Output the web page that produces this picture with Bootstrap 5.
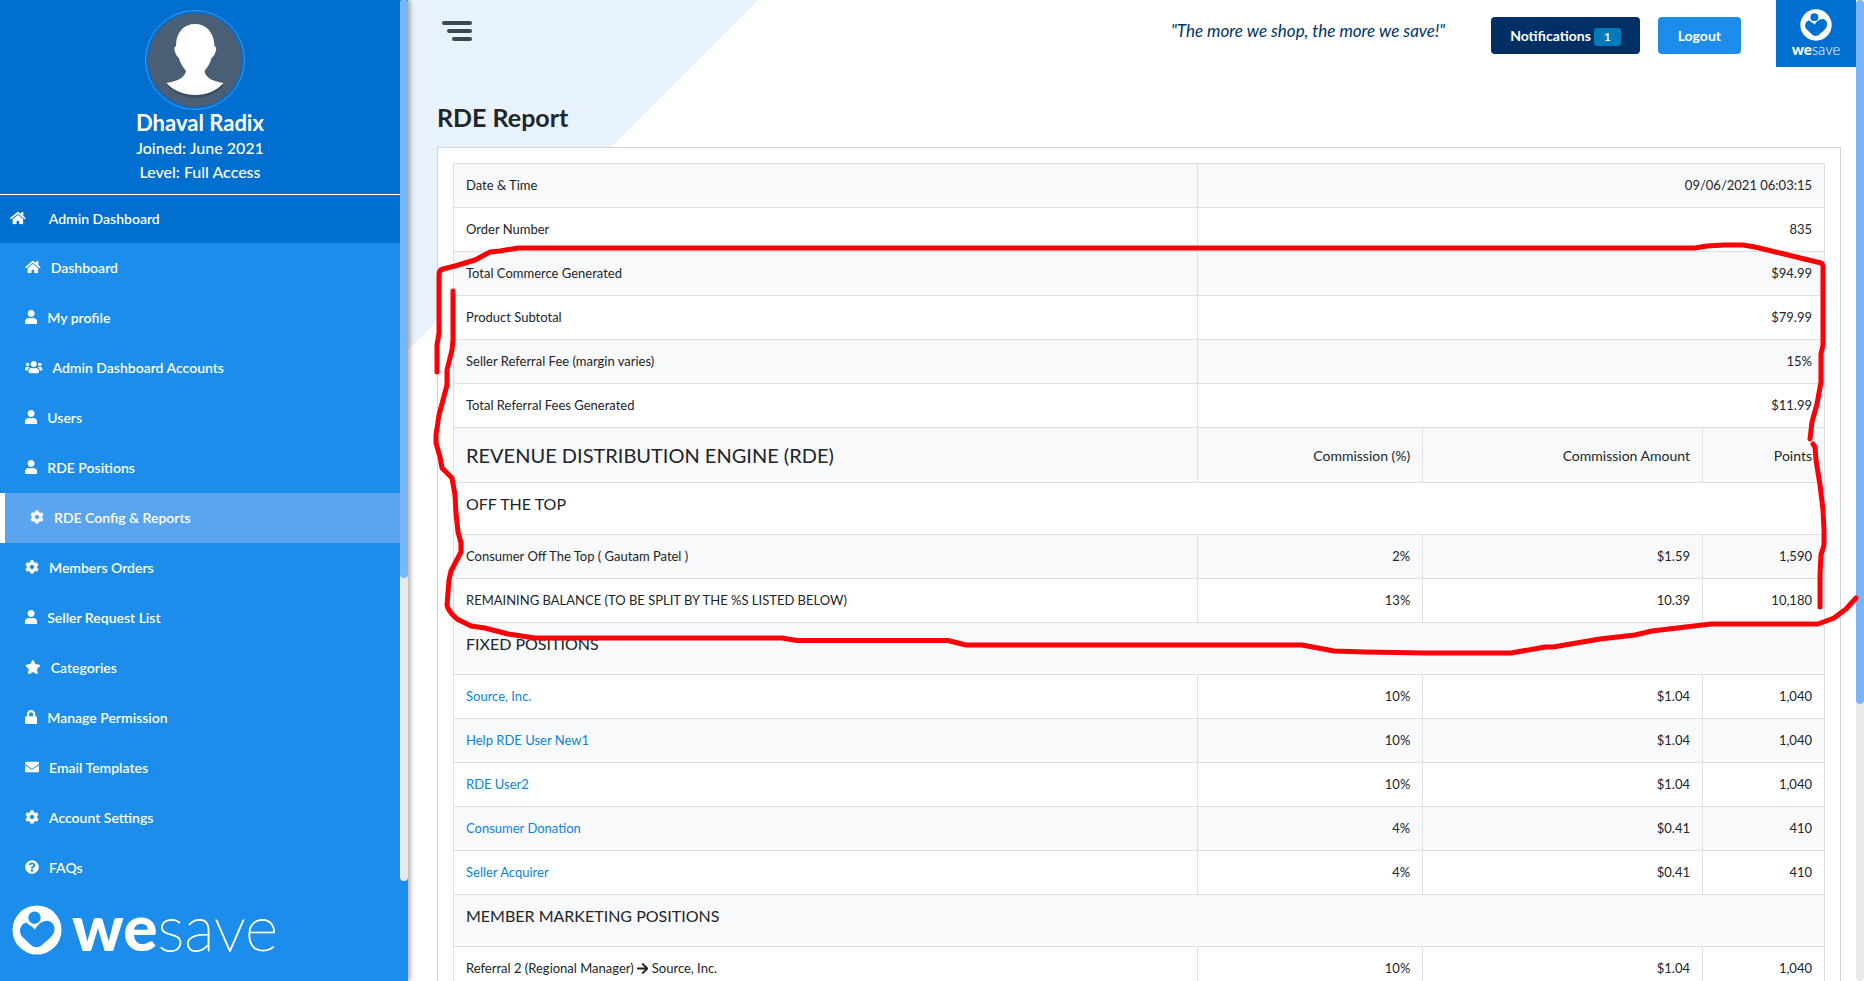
<!DOCTYPE html>
<html lang="en">
<head>
<meta charset="utf-8">
<meta name="viewport" content="width=device-width, initial-scale=1">
<title>RDE Report</title>
<link href="https://cdn.jsdelivr.net/npm/bootstrap@5.3.0/dist/css/bootstrap.min.css" rel="stylesheet">
<style>
  body { font-family: Lato, "Open Sans", sans-serif; color: #212529; background: #fff; }
  .ico { height: 14px; width: auto; fill: currentColor; flex: none; }

  .sidebar { width: 408px; background: #1c8dea; color: #fff; box-shadow: 2px 0 5px rgba(0,0,0,.35); z-index: 2; }
  .side-scroll { flex: 1 1 0; min-height: 0; }
  .side-panel { overflow: hidden; }
  .profile { background: #006fcf; border-bottom: 1px solid #fff; height: 195px; padding-top: 10px; }
  .avatar { width: 100px; height: 100px; margin-right: 10px; }
  .profile-name { font-size: 22px; line-height: 26px; font-weight: 700; }
  .profile-meta { font-size: 16px; line-height: 24px; font-weight: 500; }
  .side-link { height: 50px; padding: 0 0 2px 25px; gap: 10px; color: #fff; font-size: 14px; font-weight: 600; text-decoration: none; }
  .side-link.top-link { background: #006fcf; height: 48px; padding-left: 10px; gap: 23px; }
  .side-link.active { background: #5aa4ee; border-left: 5px solid #fff; }
  .track { width: 8px; background: #e9e9e9; border-radius: 4px; flex: none; }
  .thumb { background: #7ab5fa; border-radius: 4px; }
  .brand-bar { height: 100px; padding: 24px 12px; gap: 10px; }
  .brand-word { font-size: 64px; line-height: 44px; }
  .brand-word b, .logo-word b { font-weight: 900; }
  .brand-word span { font-weight: 100; -webkit-text-stroke: 1px #fff; }

  .main { background: linear-gradient(135deg, #e7f2fd 247px, transparent 248px); min-width: 0; }
  .menu-btn { margin: 21px 0 0 34px; line-height: 0; }
  .slogan { font-size: 17px; line-height: 24px; font-style: italic; color: #003468; margin: 19px 46px 0 auto; }
  .action { height: 37px; margin-top: 17px; border-radius: 4px; font-size: 14px; font-weight: 700; color: #fff; padding: 0 19px; border: 0; }
  .action-notify { background: #002f66; }
  .action-notify .badge { background: #007ab8; font-size: 11px; line-height: 18px; font-weight: 700; padding: 0 10px; border-radius: 3px; }
  .action-logout { background: #1c8dea; margin-left: 18px; padding: 0 20px; }
  .corner-logo { width: 80px; height: 67px; background: #006fcf; margin-left: 35px; color: #fff; text-decoration: none; padding-top: 9px; }
  .logo-word { font-size: 15px; line-height: 16px; }
  .logo-word span { font-weight: 300; }
  .page-title { font-size: 25px; line-height: 30px; font-weight: 700; margin: 35px 0 15px 29px; }
  .report { margin: 0 15px 0 29px; border: 1px solid #ced4d9; border-radius: 0; padding: 15px; }
  .report-table { --bs-table-striped-bg: #f8f9fb; --bs-table-striped-color: #212529; border-color: #dcdfe3; font-size: 13px; line-height: 19px; margin: 0; table-layout: fixed; }
  .report-table > tbody > tr > * { padding: 12px; font-weight: 400; vertical-align: middle; }
  .report-table > tbody > tr > th { font-size: 14px; }
  .report-table a { color: #0a83e0; text-decoration: none; }
  .engine-title { font-size: 20px; line-height: 30px; font-weight: 400; margin: 0; }
  .section-title { font-size: 16px; line-height: 17px; font-weight: 400; margin: 0 0 10px; }
  .arrow { height: 13px; vertical-align: -2px; }
  .marker { left: 0; top: 0; z-index: 5; pointer-events: none; overflow: visible; }
</style>
</head>
<body class="overflow-hidden">

<svg class="d-none" aria-hidden="true">
  <symbol id="i-home" viewBox="0 0 576 512"><path d="M280.37 148.26L96 300.11V464a16 16 0 0 0 16 16l112.06-.29a16 16 0 0 0 15.92-16V368a16 16 0 0 1 16-16h64a16 16 0 0 1 16 16v95.64a16 16 0 0 0 16 16.05L464 480a16 16 0 0 0 16-16V300L295.67 148.26a12.19 12.19 0 0 0-15.3 0zM571.6 251.47L488 182.56V44.05a12 12 0 0 0-12-12h-56a12 12 0 0 0-12 12v72.61L318.47 43a48 48 0 0 0-61 0L4.34 251.47a12 12 0 0 0-1.6 16.9l25.5 31A12 12 0 0 0 45.15 301l235.22-193.74a12.19 12.19 0 0 1 15.3 0L530.9 301a12 12 0 0 0 16.9-1.6l25.5-31a12 12 0 0 0-1.7-16.93z"/></symbol>
  <symbol id="i-user" viewBox="0 0 448 512"><path d="M224 256c70.7 0 128-57.3 128-128S294.7 0 224 0 96 57.3 96 128s57.3 128 128 128zm89.6 32h-16.7c-22.2 10.2-46.9 16-72.9 16s-50.6-5.8-72.9-16h-16.7C60.2 288 0 348.2 0 422.4V464c0 26.5 21.5 48 48 48h352c26.5 0 48-21.5 48-48v-41.6c0-74.2-60.2-134.4-134.4-134.4z"/></symbol>
  <symbol id="i-users" viewBox="0 0 640 512"><path d="M96 224c35.3 0 64-28.7 64-64s-28.7-64-64-64-64 28.7-64 64 28.7 64 64 64zm448 0c35.3 0 64-28.7 64-64s-28.7-64-64-64-64 28.7-64 64 28.7 64 64 64zm32 32h-64c-17.6 0-33.5 7.1-45.1 18.6 40.3 22.1 68.9 62 75.1 109.4h66c17.7 0 32-14.3 32-32v-32c0-35.3-28.7-64-64-64zm-256 0c61.9 0 112-50.1 112-112S381.9 32 320 32 208 82.1 208 144s50.1 112 112 112zm76.8 32h-8.3c-20.8 10-43.9 16-68.5 16s-47.6-6-68.5-16h-8.3C179.6 288 128 339.6 128 403.2V432c0 26.5 21.5 48 48 48h288c26.5 0 48-21.5 48-48v-28.8c0-63.6-51.6-115.2-115.2-115.2zm-223.7-13.4C161.5 263.1 145.6 256 128 256H64c-35.3 0-64 28.7-64 64v32c0 17.7 14.3 32 32 32h65.9c6.3-47.4 34.9-87.3 75.2-109.4z"/></symbol>
  <symbol id="i-cog" viewBox="0 0 512 512"><path d="M487.4 315.7l-42.6-24.6c4.3-23.2 4.3-47 0-70.2l42.6-24.6c4.9-2.8 7.1-8.6 5.5-14-11.1-35.6-30-67.8-54.7-94.6-3.8-4.1-10-5.1-14.8-2.3L380.8 110c-17.9-15.4-38.5-27.3-60.8-35.1V25.8c0-5.6-3.9-10.5-9.4-11.7-36.7-8.2-74.3-7.8-109.2 0-5.5 1.2-9.4 6.1-9.4 11.7V75c-22.2 7.9-42.8 19.8-60.8 35.1L88.7 85.5c-4.9-2.8-11-1.9-14.8 2.3-24.7 26.7-43.6 58.9-54.7 94.6-1.7 5.4.6 11.2 5.5 14L67.3 221c-4.3 23.2-4.3 47 0 70.2l-42.6 24.6c-4.9 2.8-7.1 8.6-5.5 14 11.1 35.6 30 67.8 54.7 94.6 3.8 4.1 10 5.1 14.8 2.3l42.6-24.6c17.9 15.4 38.5 27.3 60.8 35.1v49.2c0 5.6 3.9 10.5 9.4 11.7 36.7 8.2 74.3 7.8 109.2 0 5.5-1.2 9.4-6.1 9.4-11.7v-49.2c22.2-7.9 42.8-19.8 60.8-35.1l42.6 24.6c4.9 2.8 11 1.9 14.8-2.3 24.7-26.7 43.6-58.9 54.7-94.6 1.5-5.5-.7-11.3-5.6-14.1zM256 336c-44.1 0-80-35.9-80-80s35.9-80 80-80 80 35.9 80 80-35.9 80-80 80z"/></symbol>
  <symbol id="i-star" viewBox="0 0 576 512"><path d="M259.3 17.8L194 150.2 47.9 171.5c-26.2 3.8-36.7 36.1-17.7 54.6l105.7 103-25 145.5c-4.5 26.3 23.2 46 46.4 33.7L288 439.6l130.7 68.7c23.2 12.2 50.9-7.4 46.4-33.7l-25-145.5 105.7-103c19-18.5 8.5-50.8-17.7-54.6L382 150.2 316.7 17.8c-11.7-23.6-45.6-23.9-57.4 0z"/></symbol>
  <symbol id="i-lock" viewBox="0 0 448 512"><path d="M400 224h-24v-72C376 68.2 307.8 0 224 0S72 68.2 72 152v72H48c-26.5 0-48 21.5-48 48v192c0 26.5 21.5 48 48 48h352c26.5 0 48-21.5 48-48V272c0-26.5-21.5-48-48-48zm-104 0H152v-72c0-39.7 32.3-72 72-72s72 32.3 72 72v72z"/></symbol>
  <symbol id="i-mail" viewBox="0 0 512 512"><path d="M502.3 190.8c3.9-3.1 9.7-.2 9.7 4.7V400c0 26.5-21.5 48-48 48H48c-26.5 0-48-21.5-48-48V195.6c0-5 5.7-7.8 9.7-4.7 22.4 17.4 52.1 39.5 154.1 113.6 21.1 15.4 56.7 47.8 92.2 47.6 35.7.3 72-32.8 92.3-47.6 102-74.1 131.6-96.3 154-113.7zM256 320c23.2.4 56.6-29.2 73.4-41.4 132.7-96.3 142.8-104.7 173.4-128.7 5.8-4.5 9.2-11.5 9.2-18.9v-19c0-26.5-21.5-48-48-48H48c-26.5 0-48 21.5-48 48v19c0 7.4 3.4 14.3 9.2 18.9 30.6 23.9 40.7 32.4 173.4 128.7 16.8 12.2 50.2 41.8 73.4 41.4z"/></symbol>
  <symbol id="i-help" viewBox="0 0 512 512"><path d="M504 256c0 136.997-111.043 248-248 248S8 392.997 8 256C8 119.083 119.043 8 256 8s248 111.083 248 248zM262.655 90c-54.497 0-89.255 22.957-116.549 63.758-3.536 5.286-2.353 12.415 2.715 16.258l34.699 26.31c5.205 3.947 12.621 3.008 16.665-2.122 17.864-22.658 30.113-35.797 57.303-35.797 20.429 0 45.698 13.148 45.698 32.958 0 14.976-12.363 22.667-32.534 33.976C247.128 238.528 216 254.941 216 296v4c0 6.627 5.373 12 12 12h56c6.627 0 12-5.373 12-12v-1.333c0-28.462 83.186-29.647 83.186-106.667 0-58.002-60.165-102-116.531-102zM256 338c-25.365 0-46 20.635-46 46 0 25.364 20.635 46 46 46s46-20.636 46-46c0-25.364-20.635-46-46-46z"/></symbol>
  <symbol id="i-arrow" viewBox="0 0 448 512"><path d="M190.5 66.9l22.2-22.2c9.4-9.4 24.6-9.4 33.9 0L441 239c9.4 9.4 9.4 24.6 0 33.9L246.6 467.3c-9.4 9.4-24.6 9.4-33.9 0l-22.2-22.2c-9.5-9.5-9.3-25 .4-34.3L311.4 296H24c-13.3 0-24-10.7-24-24v-32c0-13.3 10.7-24 24-24h287.4L190.9 101.2c-9.8-9.3-10-24.8-.4-34.3z"/></symbol>
  <!-- round heart-person mark -->
  <symbol id="i-mark" viewBox="0 0 50 50"><path fill="currentColor" fill-rule="evenodd" d="M25 .5a24.500 24.500 0 1 0 0 49a24.500 24.500 0 1 0 0-49zM22.500 6.500a6.200 6.200 0 1 1 0 12.400a6.200 6.200 0 1 1 0-12.400zM14.500 17.500C16.500 20.500 20 20.500 22.800 24.500C26 19.500 30 16 35 15.800C39.500 15.800 42.500 19.500 42.500 24C42.500 28 40.500 30.500 38 33L30 40C26.500 43 22 43 19 40L11.500 33C9 30.500 8 28.500 8 26C8 21.500 11 18.300 14.500 17.500z"/></symbol>
</svg>

<div class="d-flex vh-100">
  <aside class="sidebar d-flex flex-column position-relative flex-shrink-0">
    <div class="side-scroll d-flex">
      <div class="side-panel flex-grow-1">
        <div class="profile d-flex flex-column align-items-center text-center">
          <svg class="avatar" viewBox="0 0 100 100" role="img" aria-label="Profile picture">
            <circle cx="50" cy="50" r="49.500" fill="#006fcf" stroke="#3f9cf0"/>
            <circle cx="50" cy="50" r="47" fill="#4a5f75"/>
            <path fill="#3c4c5e" d="M21 75l58 0c-8 8-17 13-28 13s-22-5-30-13z"/>
            <path fill="#fff" d="M50 14c11 0 19 8 19.500 22c2 1 2 3 1 6c-1 3-2 4-4 6c-1 5-4 9-7 13c1 7 8 10 19 12c-7 8-17 12-28 12s-22-4-29-12c11-2 18-5 19.500-12c-3-4-6-8-7-13c-2-2-3-3-4-6c-1-3-1-5 1-6c0-14 8-22 19-22z"/>
          </svg>
          <div class="profile-name">Dhaval Radix</div>
          <div class="profile-meta">Joined: June 2021</div>
          <div class="profile-meta">Level: Full Access</div>
        </div>
        <nav aria-label="Admin">
          <a class="side-link top-link d-flex align-items-center" href="#"><svg class="ico" viewBox="0 0 576 512"><use href="#i-home"/></svg>Admin Dashboard</a>
          <a class="side-link d-flex align-items-center" href="#"><svg class="ico" viewBox="0 0 576 512"><use href="#i-home"/></svg>Dashboard</a>
          <a class="side-link d-flex align-items-center" href="#"><svg class="ico" viewBox="0 0 448 512"><use href="#i-user"/></svg>My profile</a>
          <a class="side-link d-flex align-items-center" href="#"><svg class="ico" viewBox="0 0 640 512"><use href="#i-users"/></svg>Admin Dashboard Accounts</a>
          <a class="side-link d-flex align-items-center" href="#"><svg class="ico" viewBox="0 0 448 512"><use href="#i-user"/></svg>Users</a>
          <a class="side-link d-flex align-items-center" href="#"><svg class="ico" viewBox="0 0 448 512"><use href="#i-user"/></svg>RDE Positions</a>
          <a class="side-link active d-flex align-items-center" href="#" aria-current="page"><svg class="ico" viewBox="0 0 512 512"><use href="#i-cog"/></svg>RDE Config &amp; Reports</a>
          <a class="side-link d-flex align-items-center" href="#"><svg class="ico" viewBox="0 0 512 512"><use href="#i-cog"/></svg>Members Orders</a>
          <a class="side-link d-flex align-items-center" href="#"><svg class="ico" viewBox="0 0 448 512"><use href="#i-user"/></svg>Seller Request List</a>
          <a class="side-link d-flex align-items-center" href="#"><svg class="ico" viewBox="0 0 576 512"><use href="#i-star"/></svg>Categories</a>
          <a class="side-link d-flex align-items-center" href="#"><svg class="ico" viewBox="0 0 448 512"><use href="#i-lock"/></svg>Manage Permission</a>
          <a class="side-link d-flex align-items-center" href="#"><svg class="ico" viewBox="0 0 512 512"><use href="#i-mail"/></svg>Email Templates</a>
          <a class="side-link d-flex align-items-center" href="#"><svg class="ico" viewBox="0 0 512 512"><use href="#i-cog"/></svg>Account Settings</a>
          <a class="side-link d-flex align-items-center" href="#"><svg class="ico" viewBox="0 0 512 512"><use href="#i-help"/></svg>FAQs</a>
        </nav>
      </div>
      <div class="track" aria-hidden="true"><div class="thumb" style="height:65.6%"></div></div>
    </div>
    <div class="brand-bar d-flex align-items-start">
      <svg width="50" height="50" viewBox="0 0 50 50" class="flex-shrink-0"><use href="#i-mark"/></svg>
      <div class="brand-word"><b>we</b><span>save</span></div>
    </div>
  </aside>

  <div class="main flex-grow-1">
    <header class="d-flex align-items-start">
      <button class="menu-btn btn p-0 border-0" type="button" aria-label="Toggle menu">
        <svg width="30" height="20" viewBox="0 0 30 20" stroke="#3f474e" stroke-width="4" stroke-linecap="round"><path d="M2 2H28M7 10H28M12 18H28"/></svg>
      </button>
      <p class="slogan">"The more we shop, the more we save!"</p>
      <button class="action action-notify" type="button">Notifications <span class="badge">1</span></button>
      <button class="action action-logout" type="button">Logout</button>
      <a class="corner-logo d-flex flex-column align-items-center" href="#">
        <svg width="32" height="32" viewBox="0 0 50 50" class="flex-shrink-0"><use href="#i-mark"/></svg>
        <span class="logo-word"><b>we</b><span>save</span></span>
      </a>
    </header>
    <main>
      <h1 class="page-title">RDE Report</h1>
      <section class="report bg-white">
        <table class="report-table table table-bordered table-striped">
          <colgroup><col style="width:54.3%"><col style="width:16.4%"><col style="width:20.4%"><col style="width:8.9%"></colgroup>
          <tbody>
            <tr><td>Date &amp; Time</td><td class="text-end" colspan="3">09/06/2021 06:03:15</td></tr>
            <tr><td>Order Number</td><td class="text-end" colspan="3">835</td></tr>
            <tr><td>Total Commerce Generated</td><td class="text-end" colspan="3">$94.99</td></tr>
            <tr><td>Product Subtotal</td><td class="text-end" colspan="3">$79.99</td></tr>
            <tr><td>Seller Referral Fee (margin varies)</td><td class="text-end" colspan="3">15%</td></tr>
            <tr><td>Total Referral Fees Generated</td><td class="text-end" colspan="3">$11.99</td></tr>
            <tr><td><h2 class="engine-title">REVENUE DISTRIBUTION ENGINE (RDE)</h2></td><th class="text-end" scope="col">Commission (%)</th><th class="text-end" scope="col">Commission Amount</th><th class="text-end" scope="col">Points</th></tr>
            <tr><td colspan="4"><h3 class="section-title">OFF THE TOP</h3></td></tr>
            <tr><td>Consumer Off The Top ( Gautam Patel )</td><td class="text-end">2%</td><td class="text-end">$1.59</td><td class="text-end">1,590</td></tr>
            <tr><td>REMAINING BALANCE (TO BE SPLIT BY THE %S LISTED BELOW)</td><td class="text-end">13%</td><td class="text-end">10.39</td><td class="text-end">10,180</td></tr>
            <tr><td colspan="4"><h3 class="section-title">FIXED POSITIONS</h3></td></tr>
            <tr><td><a href="#">Source, Inc.</a></td><td class="text-end">10%</td><td class="text-end">$1.04</td><td class="text-end">1,040</td></tr>
            <tr><td><a href="#">Help RDE User New1</a></td><td class="text-end">10%</td><td class="text-end">$1.04</td><td class="text-end">1,040</td></tr>
            <tr><td><a href="#">RDE User2</a></td><td class="text-end">10%</td><td class="text-end">$1.04</td><td class="text-end">1,040</td></tr>
            <tr><td><a href="#">Consumer Donation</a></td><td class="text-end">4%</td><td class="text-end">$0.41</td><td class="text-end">410</td></tr>
            <tr><td><a href="#">Seller Acquirer</a></td><td class="text-end">4%</td><td class="text-end">$0.41</td><td class="text-end">410</td></tr>
            <tr><td colspan="4"><h3 class="section-title">MEMBER MARKETING POSITIONS</h3></td></tr>
            <tr><td>Referral 2 (Regional Manager) <svg class="ico arrow" viewBox="0 0 448 512"><use href="#i-arrow"/></svg> Source, Inc.</td><td class="text-end">10%</td><td class="text-end">$1.04</td><td class="text-end">1,040</td></tr>
          </tbody>
        </table>
      </section>
    </main>
  </div>

  <div class="track" aria-hidden="true"><div class="thumb" style="height:71.8%"></div></div>
</div>

<!-- freehand red pen marks drawn over the report -->
<svg class="marker position-absolute" width="1856" height="700" viewBox="0 0 1856 700" fill="none" stroke="#fb0007" stroke-width="5" stroke-linecap="round" stroke-linejoin="round" aria-hidden="true">
  <path d="M437 372V345L439 333V275Q439 270 443 269L455 266L475 260L490 252L500 251L518 248H1695L1707 246L1724 245L1743 245L1755 247L1780 253L1821 263Q1823 264 1823 267V345L1821 354V382L1817 404L1812 422L1810 439"/>
  <path d="M1813 444L1815 447L1816 460L1820 485L1823 510L1824 530V545L1821 555L1820 575V607"/>
  <path d="M453 291V340L452 350L447 370V385L443 400L439 415L436 435V443L440 457L442 468L452 478L455 495L456 513L458 532L461 543V552L451 571L449 580L447 605Q448 611 457 619L471 626L485 628L508 634L535 638H782L797 640.500H948L966 645H1302L1334 651L1365 652L1425 653H1511L1534 649L1545 647L1553 647L1600 639L1635 635L1652 631L1711 624H1818L1834 618L1846 609L1856 598"/>
</svg>

<script src="https://cdn.jsdelivr.net/npm/bootstrap@5.3.0/dist/js/bootstrap.bundle.min.js"></script>
</body>
</html>
